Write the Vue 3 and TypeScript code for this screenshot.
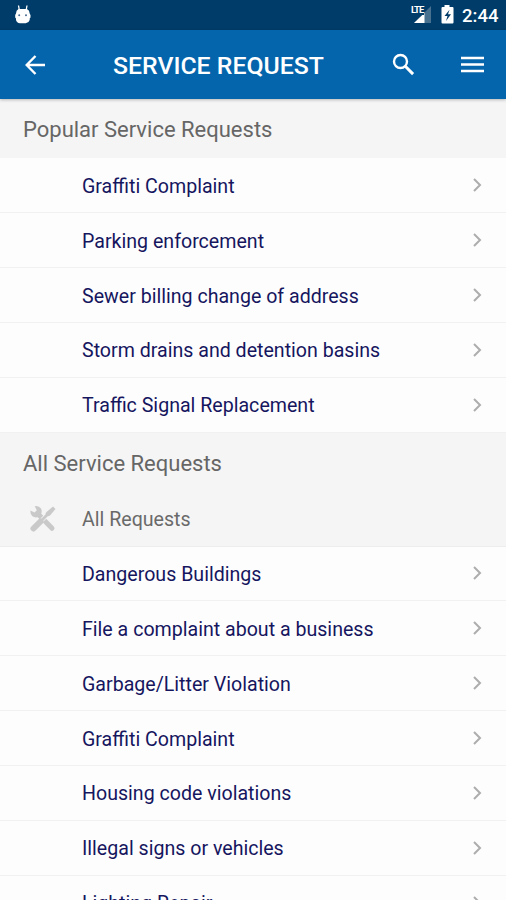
<script setup lang="ts">
const popular: string[] = [
  'Graffiti Complaint',
  'Parking enforcement',
  'Sewer billing change of address',
  'Storm drains and detention basins',
  'Traffic Signal Replacement',
]
const requests: string[] = [
  'Dangerous Buildings',
  'File a complaint about a business',
  'Garbage/Litter Violation',
  'Graffiti Complaint',
  'Housing code violations',
  'Illegal signs or vehicles',
  'Lighting Repair',
]
</script>

<template>
  <div class="screen">
    <div class="status">
      <svg class="droid" width="18" height="20" viewBox="0 0 18 20">
        <path d="M4.5 .5 5.300 5M13 .5 12.200 5" stroke="#fff" stroke-width="1.300" />
        <path d="M4.500 4h8.500Q15.700 5.200 15.700 8.500L16.500 10v2.500l-.8 1V15q-.7 2.800-4 3.300H6Q2.700 17.800 2 15v-1.500L1.200 12.500V10l.8-1.500Q2 5.200 4.500 4Z" fill="#fff" />
        <circle cx="5.2" cy="10.3" r="1" fill="#496b91" /><circle cx="12" cy="10.3" r="1" fill="#496b91" />
      </svg>
      <div class="indicators">
        <div class="signal">
          <svg width="23" height="18" viewBox="0 0 23 18">
            <path d="M22 1v17H5Z" fill="#47718f" />
            <path d="M15.500 8v10H5Z" fill="#fff" />
          </svg>
          <span class="lte">LTE</span>
        </div>
        <svg class="battery" width="13" height="19" viewBox="0 0 13 19">
          <path d="M3.500 0h5v2H11.500q1 0 1 1v14.500q0 1-1 1h-10q-1 0-1-1V3q0-1 1-1h2Z" fill="#fff" />
          <path d="M8.500 4.800 3.500 11h3l-1.500 5 5-6.700H7Z" fill="#003b69" />
        </svg>
        <span class="time">2:44</span>
      </div>
    </div>
    <header class="bar">
      <svg class="back" width="22" height="20" viewBox="0 0 22 20"><path d="M20 10H2M10.500 1 1.700 10l8.800 9" fill="none" stroke="#fff" stroke-width="2.400" /></svg>
      <h1>SERVICE REQUEST</h1>
      <svg class="search" width="23" height="23" viewBox="0 0 23 23"><circle cx="8.500" cy="8.500" r="6.500" fill="none" stroke="#fff" stroke-width="2.400" /><path d="m13.300 13.300 7.800 7.800" stroke="#fff" stroke-width="3" /></svg>
      <svg class="menu" width="23" height="17" viewBox="0 0 23 17"><path d="M0 2h23M0 8.500h23M0 15h23" stroke="#fff" stroke-width="2.500" /></svg>
    </header>
    <h2 class="first"><span>Popular Service Requests</span></h2>
    <ul>
      <li v-for="name in popular" :key="name">
        <span>{{ name }}</span>
        <svg width="9" height="14" viewBox="0 0 9 14"><path d="m1 1 6 6-6 6" fill="none" stroke="#adadad" stroke-width="2" /></svg>
      </li>
    </ul>
    <h2><span>All Service Requests</span></h2>
    <div class="category">
      <svg width="28" height="28" viewBox="0 0 28 28">
        <path d="m10.500 10.500 12.500 12.800" stroke="#c9c9c9" stroke-width="5" stroke-linecap="round" />
        <path d="M1.500 5.500 5.500 7.600 7.800 5.200 5.700 1.200Q10 .4 12 3.600 13.400 6.300 12 9.200L9.200 12Q6 13.100 3.400 11.300 1 9.200 1.500 5.500Z" fill="#c9c9c9" />
        <path d="m10.500 17.500 8-8" stroke="#f5f5f5" stroke-width="4.500" />
        <path d="m4.500 23.500 7-7" stroke="#c9c9c9" stroke-width="6" stroke-linecap="round" />
        <path d="m11 17 9-9" stroke="#c9c9c9" stroke-width="2.800" />
        <path d="m17.500 7 6.500-5.500 2.500 2.500L21 10.500Q18.700 12 17 10.300 15.800 8.700 17.500 7Z" fill="#c9c9c9" />
      </svg>
      <span>All Requests</span>
    </div>
    <ul>
      <li v-for="name in requests" :key="name">
        <span>{{ name }}</span>
        <svg width="9" height="14" viewBox="0 0 9 14"><path d="m1 1 6 6-6 6" fill="none" stroke="#adadad" stroke-width="2" /></svg>
      </li>
    </ul>
  </div>
</template>

<style>
body { margin: 0; overflow: hidden; }
</style>

<style scoped>
.screen { height: 900px; overflow: hidden; background: #fdfdfd; font-family: Roboto, sans-serif; }
.status { height: 30px; background: #003c69; display: flex; justify-content: space-between; box-sizing: border-box; padding: 5px 9px 0 14px; }
.indicators { display: flex; align-items: flex-start; }
.signal { position: relative; width: 23px; height: 18px; margin-right: 9px; }
.lte { position: absolute; left: 2px; top: 0; font-size: 9.5px; line-height: 10px; font-weight: 700; color: #fff; background: #003c69; letter-spacing: -1px; padding-right: 1px; }
.battery { margin-right: 8px; }
.time { color: #fff; font-size: 18.5px; line-height: 22px; font-weight: 500; width: 35px; white-space: nowrap; }
.bar { height: 69px; background: #0465ad; display: flex; align-items: center; box-sizing: border-box; padding: 0 22px 0 25px; position: relative; z-index: 1; box-shadow: 0 1px 3px rgba(0, 0, 0, .25); }
h1 { margin: 2px auto 0 66px; color: #fff; font-size: 24.8px; line-height: 30px; font-weight: 500; white-space: nowrap; }
.search { margin-right: 46px; }
h2 { margin: 0; height: 59px; background: #f5f5f5; color: #666; font-size: 22px; font-weight: 400; display: flex; align-items: center; padding: 2px 23px 0; box-sizing: border-box; }
.first { height: 59.4px; padding-top: 2px; }
ul { margin: 0; padding: 0; list-style: none; }
li, .category { height: 54.86px; box-sizing: border-box; display: flex; align-items: center; font-size: 19.6px; }
li { color: #16165f; justify-content: space-between; border-bottom: 1px solid #f1f1f1; padding: 2px 24px 0 82px; }
li svg { margin-top: -2px; }
.category { background: #f5f5f5; color: #6a6a6a; padding-left: 29px; padding-top: 1px; gap: 25px; border-bottom: 1px solid #ededed; }
</style>
